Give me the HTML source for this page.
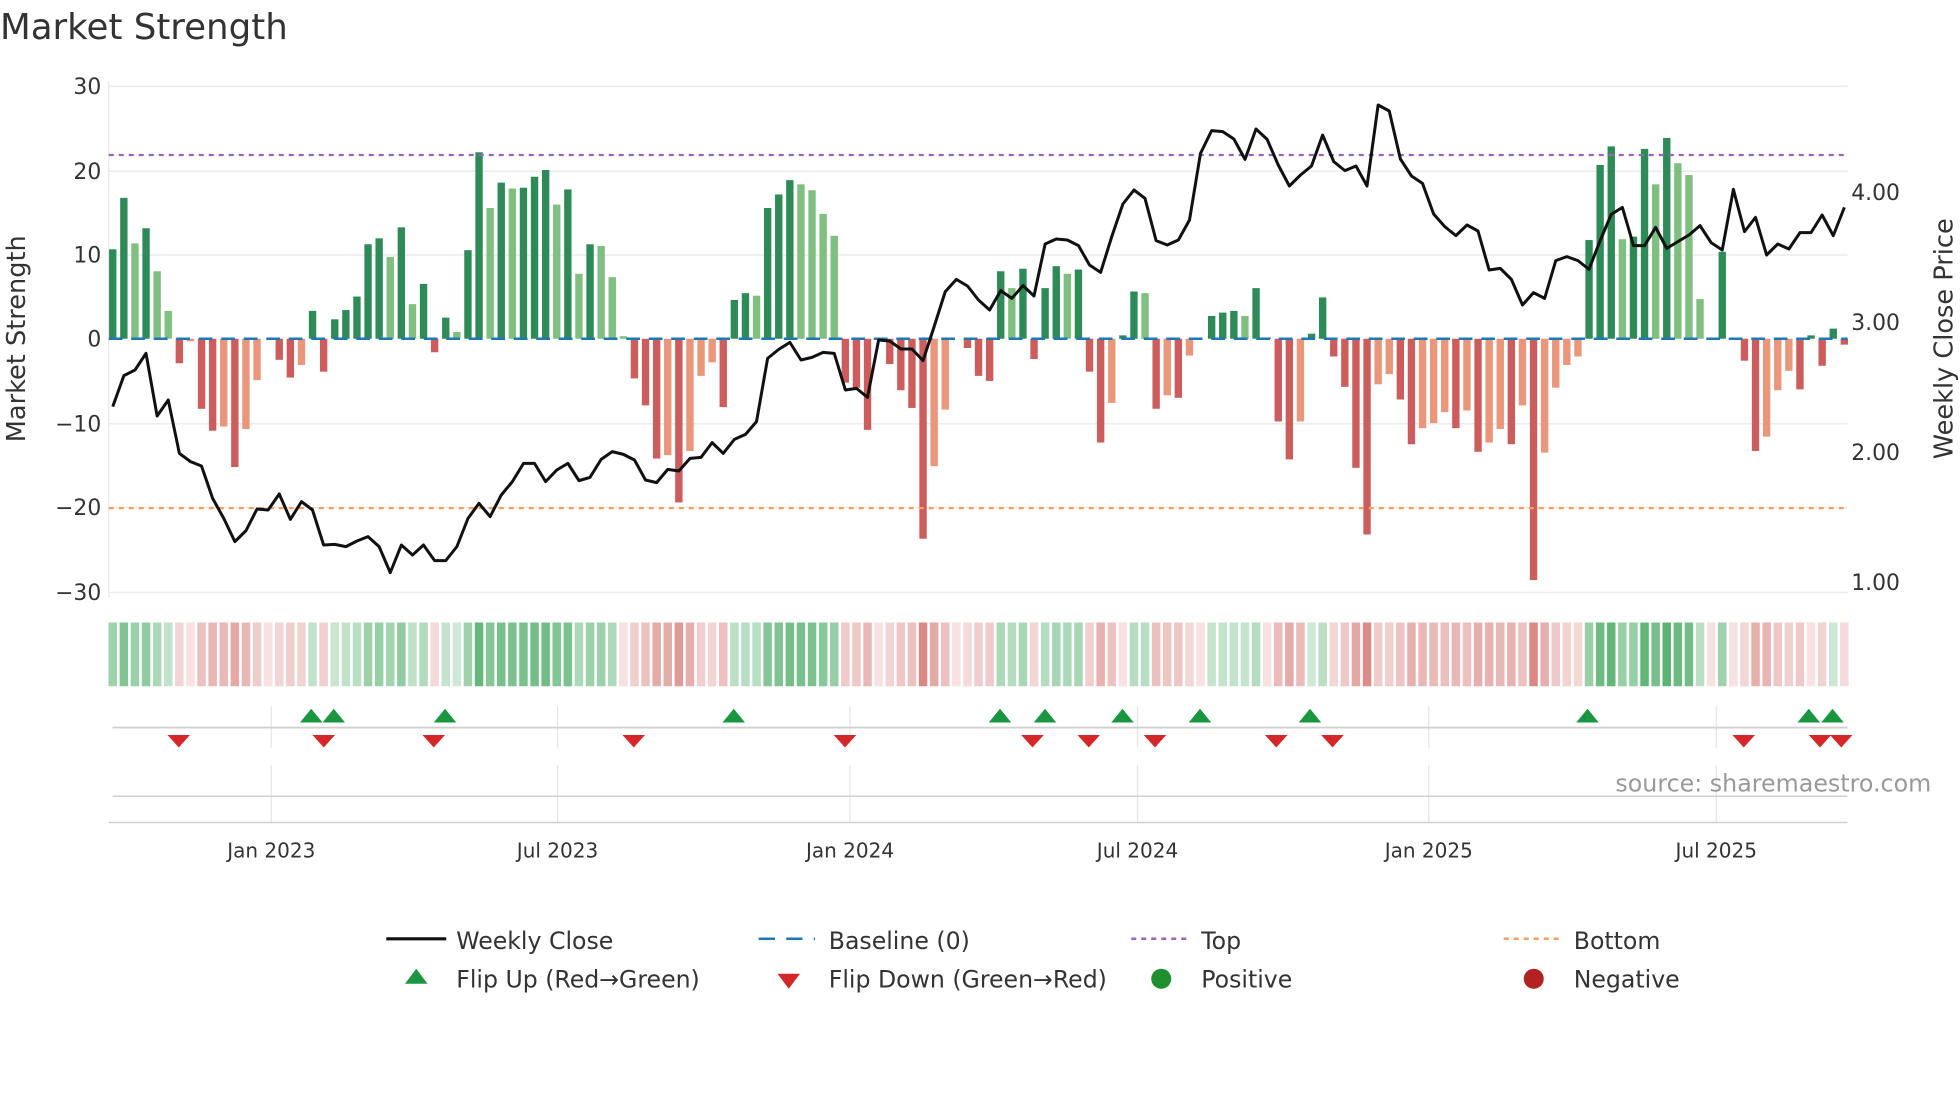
<!DOCTYPE html>
<html><head><meta charset="utf-8">
<style>
html,body{margin:0;padding:0;background:#fff;}
svg{display:block;}
text{font-family:"DejaVu Sans","Liberation Sans",sans-serif;fill:#333;}
</style></head>
<body>
<svg id="c" width="1960" height="1102" viewBox="0 0 1568 881.6" xmlns="http://www.w3.org/2000/svg">
<text x="0" y="31" font-size="28.5">Market Strength</text>
<!-- grid -->
<g stroke="#ececec" stroke-width="1.2">
<line x1="87" y1="69" x2="1478" y2="69"/>
<line x1="87" y1="137" x2="1478" y2="137"/>
<line x1="87" y1="204" x2="1478" y2="204"/>
<line x1="87" y1="339" x2="1478" y2="339"/>
<line x1="87" y1="406" x2="1478" y2="406"/>
<line x1="87" y1="474" x2="1478" y2="474"/>
<line x1="87" y1="65" x2="87" y2="478"/>
</g>
<g font-size="17.5" text-anchor="end">
<text x="81" y="75">30</text>
<text x="81" y="143">20</text>
<text x="81" y="210">10</text>
<text x="81" y="277">0</text>
<text x="81" y="345">−10</text>
<text x="81" y="412">−20</text>
<text x="81" y="480">−30</text>
</g>
<g font-size="17.5">
<text x="1481" y="160">4.00</text>
<text x="1481" y="264">3.00</text>
<text x="1481" y="368">2.00</text>
<text x="1481" y="472">1.00</text>
</g>
<text transform="translate(20,271) rotate(-90)" font-size="20.5" text-anchor="middle">Market Strength</text>
<text transform="translate(1562,271) rotate(-90)" font-size="20.5" text-anchor="middle">Weekly Close Price</text>
<g id="bars"></g>
<line x1="87" y1="271" x2="1478" y2="271" stroke="#1f77b4" stroke-width="2" stroke-dasharray="11,7"/>
<line x1="87" y1="124" x2="1478" y2="124" stroke="#9467bd" stroke-width="1.8" stroke-dasharray="4,4"/>
<line x1="87" y1="406.5" x2="1478" y2="406.5" stroke="#f0a060" stroke-width="1.8" stroke-dasharray="4,4"/>
<polyline id="price" fill="none" stroke="#111" stroke-width="2.4" stroke-linejoin="round"/>
<g id="heat"></g>
<!-- lower panel -->
<g stroke="#e6e6e6" stroke-width="1">
<line x1="217" y1="565" x2="217" y2="598"/><line x1="446" y1="565" x2="446" y2="598"/>
<line x1="680" y1="565" x2="680" y2="598"/><line x1="910" y1="565" x2="910" y2="598"/>
<line x1="1143" y1="565" x2="1143" y2="598"/><line x1="1373" y1="565" x2="1373" y2="598"/>
<line x1="217" y1="612" x2="217" y2="658"/><line x1="446" y1="612" x2="446" y2="658"/>
<line x1="680" y1="612" x2="680" y2="658"/><line x1="910" y1="612" x2="910" y2="658"/>
<line x1="1143" y1="612" x2="1143" y2="658"/><line x1="1373" y1="612" x2="1373" y2="658"/>
</g>
<line x1="90" y1="582" x2="1478" y2="582" stroke="#d0d0d0" stroke-width="1.5"/>
<line x1="90" y1="637" x2="1478" y2="637" stroke="#d0d0d0" stroke-width="1.2"/>
<line x1="87" y1="658" x2="1478" y2="658" stroke="#d0d0d0" stroke-width="1.2"/>
<g id="marks"></g>
<text x="1545" y="633" font-size="19" text-anchor="end" style="fill:#999">source: sharemaestro.com</text>
<g font-size="16" text-anchor="middle">
<text x="217" y="686">Jan 2023</text>
<text x="446" y="686">Jul 2023</text>
<text x="680" y="686">Jan 2024</text>
<text x="910" y="686">Jul 2024</text>
<text x="1143" y="686">Jan 2025</text>
<text x="1373" y="686">Jul 2025</text>
</g>
<!-- legend -->
<line x1="309" y1="751" x2="357" y2="751" stroke="#111" stroke-width="2.5"/>
<line x1="607" y1="751" x2="652" y2="751" stroke="#1f77b4" stroke-width="2" stroke-dasharray="13,9"/>
<line x1="905" y1="751" x2="950" y2="751" stroke="#9467bd" stroke-width="2" stroke-dasharray="4,4"/>
<line x1="1203" y1="751" x2="1248" y2="751" stroke="#f0a060" stroke-width="2" stroke-dasharray="4,4"/>
<polygon points="324,787 333,775 342,787" fill="#1a9641"/>
<polygon points="622,779 640,779 631,791" fill="#d62728"/>
<circle cx="929" cy="783" r="8" fill="#1f8f2f"/>
<circle cx="1227" cy="783" r="8" fill="#b22222"/>
<g font-size="18.9">
<text x="365" y="759">Weekly Close</text>
<text x="663" y="759">Baseline (0)</text>
<text x="961" y="759">Top</text>
<text x="1259" y="759">Bottom</text>
<text x="365" y="790">Flip Up (Red→Green)</text>
<text x="663" y="790">Flip Down (Green→Red)</text>
<text x="961" y="790">Positive</text>
<text x="1259" y="790">Negative</text>
</g>
</svg>
<script>
var V=[[10.6,'G'],[16.7,'G'],[11.3,'L'],[13.1,'G'],[8,'L'],[3.3,'L'],[-2.9,'R'],[-0.3,'r'],[-8.3,'R'],[-10.9,'R'],[-10.4,'r'],[-15.2,'R'],[-10.7,'r'],[-4.9,'r'],[0,'r'],[-2.5,'R'],[-4.6,'R'],[-3.1,'r'],[3.3,'G'],[-3.9,'R'],
[2.3,'G'],[3.4,'G'],[5,'G'],[11.2,'G'],[11.9,'G'],[9.7,'L'],[13.2,'G'],[4.1,'L'],[6.5,'G'],[-1.6,'R'],[2.5,'G'],[0.8,'L'],[10.5,'G'],[22.1,'G'],[15.5,'L'],[18.5,'G'],[17.8,'L'],[17.9,'G'],[19.2,'G'],[20,'G'],
[15.9,'L'],[17.7,'G'],[7.7,'L'],[11.2,'G'],[11,'L'],[7.3,'L'],[0.3,'L'],[-4.7,'R'],[-7.9,'R'],[-14.2,'R'],[-13.8,'r'],[-19.4,'R'],[-13.3,'r'],[-4.4,'r'],[-2.8,'r'],[-8.1,'R'],[4.6,'G'],[5.4,'G'],[5.1,'L'],[15.5,'G'],
[17.1,'G'],[18.8,'G'],[18.3,'L'],[17.6,'L'],[14.8,'L'],[12.2,'L'],[-5.2,'R'],[-5.8,'R'],[-10.8,'R'],[0,'r'],[-3,'R'],[-6.1,'R'],[-8.2,'R'],[-23.7,'R'],[-15.1,'r'],[-8.4,'r'],[0,'r'],[-1.1,'R'],[-4.4,'R'],[-5,'R'],
[8,'G'],[6,'L'],[8.3,'G'],[-2.4,'R'],[6,'G'],[8.6,'G'],[7.7,'L'],[8.2,'G'],[-3.9,'R'],[-12.3,'R'],[-7.6,'r'],[0.4,'G'],[5.6,'G'],[5.4,'L'],[-8.3,'R'],[-6.7,'r'],[-7,'R'],[-2,'r'],[0,'g'],[2.7,'G'],
[3.1,'G'],[3.3,'G'],[2.7,'L'],[6,'G'],[0.15,'G'],[-9.8,'R'],[-14.3,'R'],[-9.8,'r'],[0.6,'G'],[4.9,'G'],[-2.1,'R'],[-5.7,'R'],[-15.3,'R'],[-23.2,'R'],[-5.4,'r'],[-4.2,'r'],[-7.2,'R'],[-12.5,'R'],[-10.6,'r'],[-10,'r'],
[-8.7,'r'],[-10.6,'R'],[-8.5,'r'],[-13.4,'R'],[-12.3,'r'],[-10.7,'r'],[-12.5,'R'],[-7.9,'r'],[-28.6,'R'],[-13.5,'r'],[-5.8,'r'],[-3.1,'r'],[-2.1,'r'],[11.7,'G'],[20.6,'G'],[22.8,'G'],[11.8,'L'],[12.1,'G'],[22.5,'G'],[18.3,'L'],
[23.8,'G'],[20.8,'L'],[19.4,'L'],[4.7,'L'],[0.15,'L'],[10.3,'G'],[0,'r'],[-2.6,'R'],[-13.3,'R'],[-11.6,'r'],[-6.1,'r'],[-3.8,'r'],[-6,'R'],[0.4,'G'],[-3.2,'R'],[1.2,'G'],[-0.7,'R']];
var P=[325.3,300.5,296,282.7,332.8,320,362.7,369.3,372.8,398.7,414.7,433.3,424.5,407.2,408,395.2,415.5,401.3,408,436,435.5,437.3,432.8,429.3,437.3,458.1,436,444,436,448.5,448.5,437.3,414.7,402.7,413.3,396,385.3,370.7,370.7,385.3,376,370.7,
384.5,381.9,367.5,361.3,363.5,368,384,386.1,375.5,376.8,366.7,365.9,354.1,362.7,351.5,347.5,337.3,286.7,279.5,273.9,288,285.9,281.9,282.7,312,310.7,317.9,272,272.8,279.2,279.2,288.5,261.3,233.3,223.5,228.8,240,248,232.5,238.7,228.5,
236.8,195.2,191.2,192,196.5,212,217.9,189.3,163.2,152,158.7,192.5,196,192,176,122.7,104.5,105.3,111.2,127.5,103.2,111.5,132,148.8,140,132.8,108,129.3,136.5,132.8,148.8,84,88.8,127.2,140.8,146.7,171.2,181.3,188.5,180,184.8,216,
214.7,223.5,244,234.1,238.7,208.5,205.3,208.5,215.5,192.5,171.5,165.9,196.5,196.5,181.9,198.7,193.3,188,180.5,194.1,200,151.5,185.3,173.9,204,195.2,199.2,186.1,186.1,172,188.5,165.9,172];
var C={G:'#2e8b57',L:'#7fbf7f',R:'#cd5c5c',r:'#e9967a',g:'#7fbf7f'};
var ns='http://www.w3.org/2000/svg',b=document.getElementById('bars'),h=document.getElementById('heat');
function el(t,a,p){var e=document.createElementNS(ns,t);for(var k in a)e.setAttribute(k,a[k]);p.appendChild(e);return e;}
var pts=[];
for(var i=0;i<V.length;i++){
 var x=90.2+8.88*i,v=V[i][0],y=271-v*6.75;
 if(Math.abs(v)>0.05) el('rect',{x:x-2.95,y:Math.min(y,271),width:5.9,height:Math.abs(v*6.75),fill:C[V[i][1]]},b);
 var a=0.22+0.58*Math.min(Math.abs(v)/24,1);
 var col=v>0?'rgba(50,160,80,'+a+')':'rgba(200,80,75,'+(a*0.85)+')';
 if(Math.abs(v)<0.5) col='rgba(220,120,120,0.22)';
 el('rect',{x:x-3.4,y:498,width:6.8,height:51,fill:col},h);
 pts.push(x.toFixed(1)+','+P[i]);
}
document.getElementById('price').setAttribute('points',pts.join(' '));
var m=document.getElementById('marks');
[249,267,356,587,800,836,898,960,1048,1270,1447,1466].forEach(function(x){el('polygon',{points:(x-9)+',578 '+x+',567 '+(x+9)+',578',fill:'#1a9641'},m);});
[143,259,347,507,676,826,871,924,1021,1066,1395,1456,1473].forEach(function(x){el('polygon',{points:(x-9)+',588 '+(x+9)+',588 '+x+',598',fill:'#d62728'},m);});
</script>
</body></html>
